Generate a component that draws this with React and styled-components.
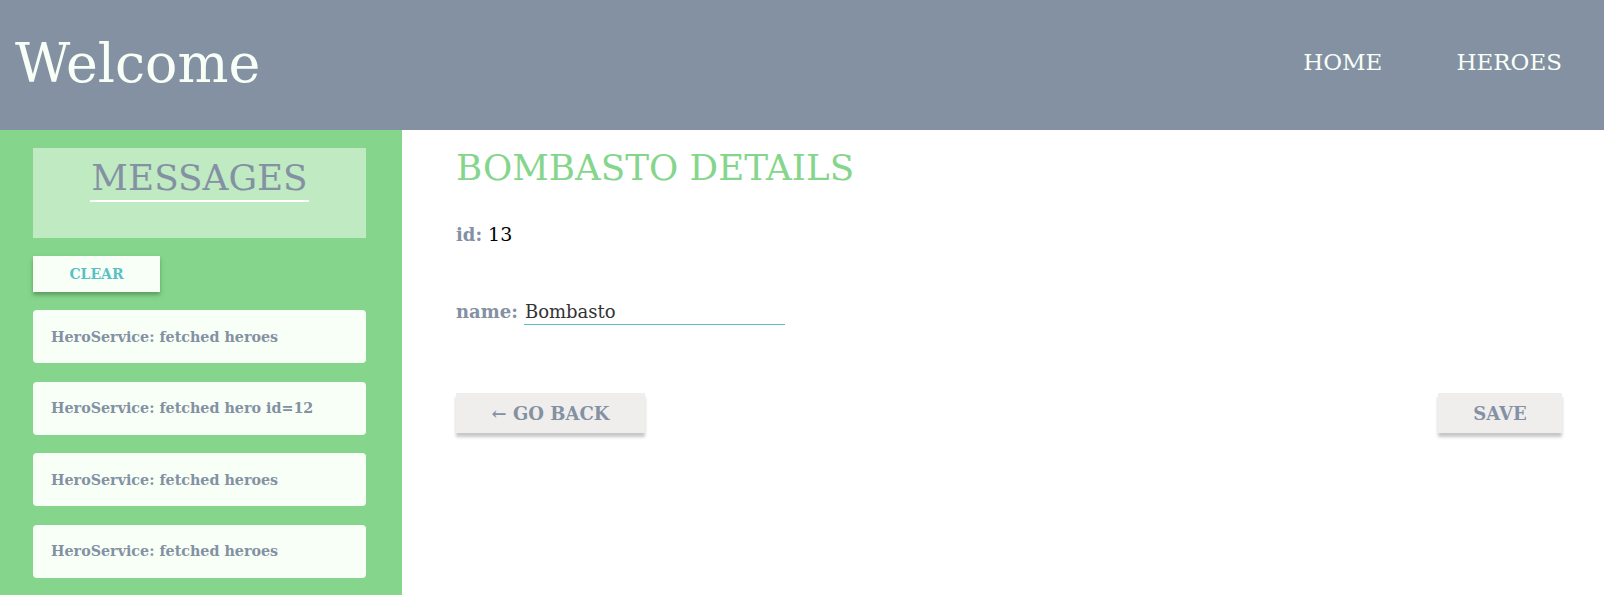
import React, { useState } from 'react';
import styled, { createGlobalStyle } from 'styled-components';

const slate = '#8491a3';
const green = '#85d68c';
const cream = '#f7fff7';
const teal = '#5bbfc8';

const GlobalStyle = createGlobalStyle`
  html, body {
    margin: 0;
    padding: 0;
    background: #fff;
    font-family: "DejaVu Serif", serif;
  }
`;

const Page = styled.div`
  display: flex;
  flex-direction: column;
  min-height: 595px;
`;

const Header = styled.header`
  height: 130px;
  background: ${slate};
  display: flex;
  align-items: center;
  justify-content: space-between;
  padding: 0 42px 0 15px;
`;

const Title = styled.h1`
  margin: 0 0 4px;
  font-size: 53.8px;
  font-weight: normal;
  color: ${cream};
`;

const Nav = styled.nav`
  display: flex;
  gap: 74px;
  margin-bottom: 6px;
`;

const NavLink = styled.a`
  font-size: 23px;
  color: ${cream};
  text-decoration: none;
  cursor: pointer;
`;

const Body = styled.div`
  flex: 1;
  display: flex;
`;

const Sidebar = styled.aside`
  width: 402px;
  flex: none;
  background: ${green};
  padding: 18px 36px 12px 33px;
  box-sizing: border-box;
  display: flex;
  flex-direction: column;
`;

const MessagesBox = styled.div`
  height: 90px;
  background: #bfeac2;
  display: flex;
  justify-content: center;
  align-items: flex-start;
`;

const MessagesTitle = styled.h2`
  margin: 10px 0 0;
  font-size: 35.8px;
  font-weight: normal;
  color: ${slate};
  border-bottom: 2px solid #fff;
  line-height: 40px;
  padding: 0 1px 2px;
`;

const ClearButton = styled.button`
  align-self: flex-start;
  margin-top: 18px;
  width: 127px;
  height: 36px;
  border: none;
  background: ${cream};
  color: ${teal};
  font-family: inherit;
  font-weight: bold;
  font-size: 14px;
  box-shadow: 0 3px 4px rgba(60, 110, 65, 0.55);
  cursor: pointer;
`;

const MessageList = styled.ul`
  list-style: none;
  margin: 18px 0 0;
  padding: 0;
  display: flex;
  flex-direction: column;
  gap: 18.67px;
`;

const MessageCard = styled.li`
  height: 53px;
  display: flex;
  align-items: center;
  padding-left: 18px;
  background: ${cream};
  border-radius: 4px;
  color: ${slate};
  font-weight: bold;
  font-size: 14.3px;
`;

const Main = styled.main`
  flex: 1;
  padding: 15px 42px 0 54px;
  display: flex;
  flex-direction: column;
`;

const DetailTitle = styled.h2`
  margin: 0;
  font-size: 35.7px;
  font-weight: normal;
  color: ${green};
  line-height: 46px;
`;

const Field = styled.div`
  display: flex;
  align-items: baseline;
  gap: 6px;
  margin-top: ${p => p.$top}px;
  font-size: 19px;
`;

const Label = styled.label`
  font-weight: bold;
  color: ${slate};
  font-size: 18px;
`;

const Value = styled.span`
  color: #000;
`;

const NameInput = styled.input`
  width: 260px;
  border: none;
  border-bottom: 1px solid ${teal};
  font-family: inherit;
  font-size: 18px;
  color: #333;
  padding: 0 0 2px 1px;
  outline: none;
  background: transparent;
`;

const Actions = styled.div`
  display: flex;
  justify-content: space-between;
  margin-top: 68px;
`;

const ActionButton = styled.button`
  width: ${p => p.$w}px;
  height: 40px;
  border: none;
  background: #f0eeed;
  color: ${slate};
  font-family: inherit;
  font-weight: bold;
  font-size: 18px;
  box-shadow: 0 4px 3px rgba(0, 0, 0, 0.22);
  cursor: pointer;
`;

const messages = [
  'HeroService: fetched heroes',
  'HeroService: fetched hero id=12',
  'HeroService: fetched heroes',
  'HeroService: fetched heroes',
];

export default function App() {
  const [name, setName] = useState('Bombasto');

  return (
    <Page>
      <GlobalStyle />
      <Header>
        <Title>Welcome</Title>
        <Nav>
          <NavLink>HOME</NavLink>
          <NavLink>HEROES</NavLink>
        </Nav>
      </Header>
      <Body>
        <Sidebar>
          <MessagesBox>
            <MessagesTitle>MESSAGES</MessagesTitle>
          </MessagesBox>
          <ClearButton>CLEAR</ClearButton>
          <MessageList>
            {messages.map((m, i) => (
              <MessageCard key={i}>{m}</MessageCard>
            ))}
          </MessageList>
        </Sidebar>
        <Main>
          <DetailTitle>{name.toUpperCase()} DETAILS</DetailTitle>
          <Field $top={32}>
            <Label>id:</Label>
            <Value>13</Value>
          </Field>
          <Field $top={56}>
            <Label htmlFor="hero-name">name:</Label>
            <NameInput
              id="hero-name"
              value={name}
              onChange={e => setName(e.target.value)}
            />
          </Field>
          <Actions>
            <ActionButton $w={189}>← GO BACK</ActionButton>
            <ActionButton $w={124}>SAVE</ActionButton>
          </Actions>
        </Main>
      </Body>
    </Page>
  );
}
